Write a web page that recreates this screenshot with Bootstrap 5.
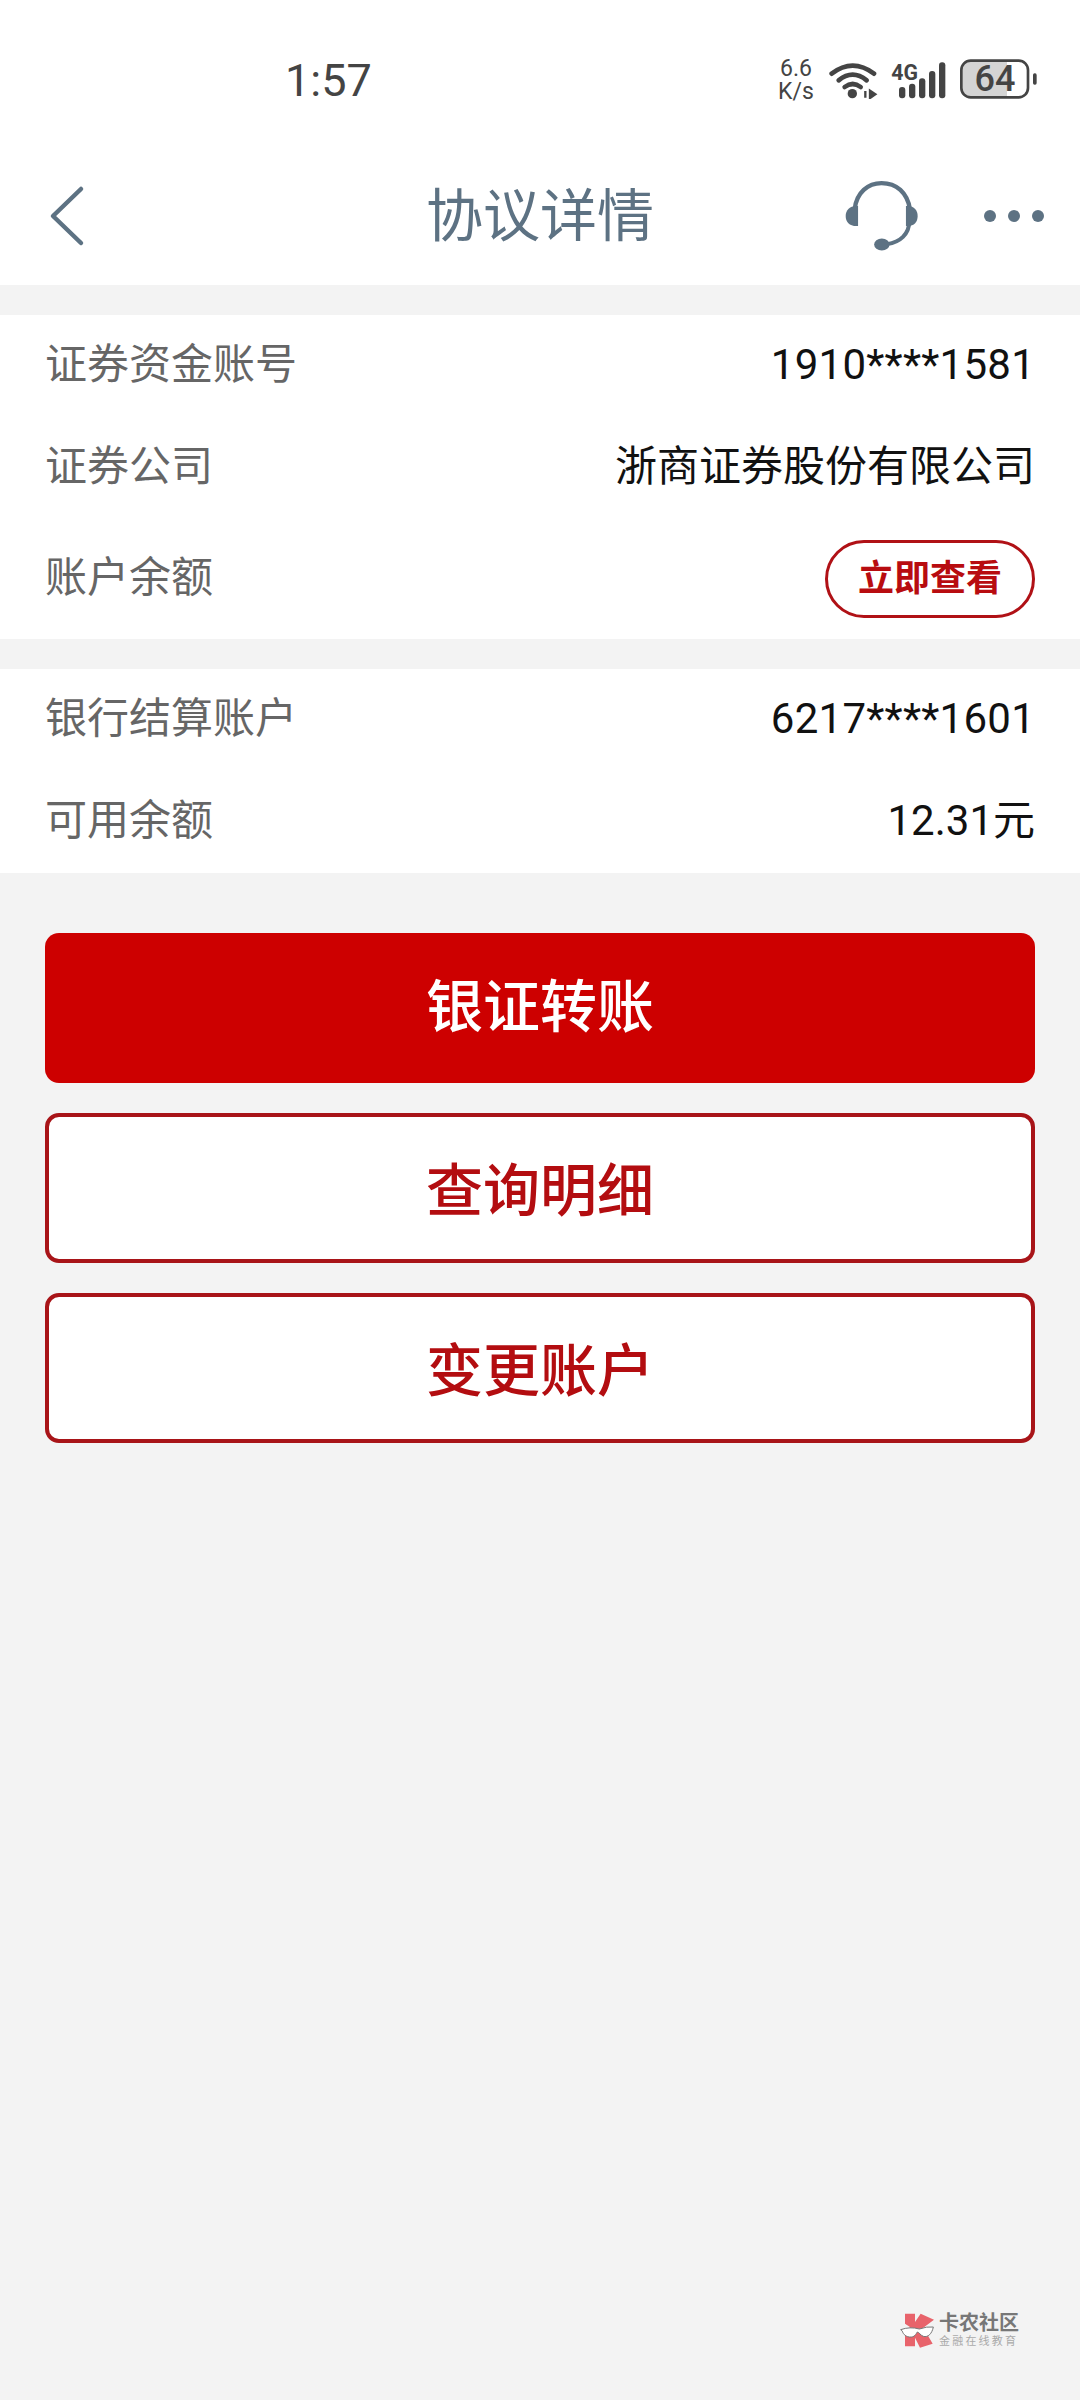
<!DOCTYPE html>
<html lang="zh-CN">
<head>
<meta charset="utf-8">
<title>协议详情</title>
<link href="https://cdn.jsdelivr.net/npm/bootstrap@5.3.0/dist/css/bootstrap.min.css" rel="stylesheet">
<style>
:root{--cn:Roboto,"Noto Sans CJK SC",sans-serif;}
html,body{height:2400px;}
body{background:#f3f3f3;font-family:var(--cn);position:relative;overflow:hidden;}
.hdr-wrap{height:285px;background:#fff;}
.stat-bar{height:130px;padding-top:15px;padding-right:42px;padding-left:285px;box-sizing:content-box;}
.stat-time{font-size:45px;line-height:1;color:#444;}
.stat-speed{font-size:23px;line-height:23px;color:#444;text-align:center;width:38px;margin-right:13px;}
.stat-svg text{font-family:Roboto,sans-serif;fill:#444;}
.stat-gap{margin-left:13px;}
.top-nav{height:140px;padding:6px 36px 4px 36px;}
.nav-side{flex:1 1 0;}
.nav-back{margin-left:13px;}
.nav-title{font-size:57px;line-height:1;color:#5d7283;}
.nav-more{margin-left:64px;}
.pane{background:#fff;padding:0 45px;}
.pane-one{margin-top:30px;height:324px;}
.pane-two{margin-top:30px;height:204px;}
.info-line{height:102px;font-size:42px;color:#111;padding-bottom:4px;}
.info-line-tall{height:120px;}
.info-num{letter-spacing:.25px;}
.info-key{color:#666;}
.pill-look{width:210px;height:78px;border:3px solid #b01116;border-radius:39px;background:#fff;color:#b80c10;font-size:36px;font-weight:700;padding:0;display:flex;align-items:center;justify-content:center;margin-top:4px;}
.act-stack{padding:60px 45px 0;gap:30px;}
.act-btn{height:150px;border-radius:14px;font-size:57px;font-weight:500;line-height:1;display:flex;align-items:center;justify-content:center;padding:0;}
.act-fill{background:#cd0000;border:0;color:#fff;padding-bottom:2px;}
.act-line{background:#fff;border:4px solid #a81418;color:#b30d10;padding-top:6px;}
.mark-wrap{position:absolute;left:900px;top:2313px;gap:4px;}
.mark-a{font-size:20px;font-weight:700;color:#777;line-height:21px;white-space:nowrap;}
.mark-b{font-size:11px;color:#aaa;line-height:12px;letter-spacing:2.2px;white-space:nowrap;margin-top:2px;}
</style>
</head>
<body>
<header class="hdr-wrap">
  <div class="stat-bar d-flex align-items-center">
    <div class="stat-time">1:57</div>
    <div class="ms-auto d-flex align-items-center">
      <div class="stat-speed">6.6<br>K/s</div>
      <svg class="stat-svg" width="50" height="38" viewBox="272 92 150 114" fill="none" stroke="#444" stroke-linecap="round">
        <path d="M283 130Q346 82 410 130" stroke-width="14"/>
        <path d="M304 150Q346 116 388 150" stroke-width="14"/>
        <path d="M322 170Q346 152 370 170" stroke-width="14"/>
        <circle cx="345" cy="190" r="14" fill="#444" stroke="none"/>
        <path d="M384 182v20M398 181v22l16-11z" stroke-width="7" stroke-linecap="butt" fill="#444"/>
      </svg>
      <svg class="stat-svg stat-gap" width="56" height="38" viewBox="458 92 168 114">
        <text x="459" y="150" font-size="64" font-weight="700" textLength="80" lengthAdjust="spacingAndGlyphs">4G</text>
        <g fill="#444">
          <rect x="482" y="170" width="19" height="34" rx="9"/>
          <rect x="512" y="160" width="19" height="44" rx="9"/>
          <rect x="542" y="144" width="19" height="60" rx="9"/>
          <rect x="572" y="122" width="19" height="82" rx="9"/>
          <rect x="602" y="96" width="19" height="108" rx="9"/>
        </g>
      </svg>
      <svg class="stat-svg stat-gap" width="78" height="42" viewBox="664 90 234 126">
        <path d="M695 95H805V205H695Q668 205 668 178V122Q668 95 695 95Z" fill="#d4d4d4"/>
        <rect x="668" y="95" width="200" height="110" rx="28" fill="none" stroke="#444" stroke-width="8"/>
        <rect x="883" y="133" width="11" height="34" rx="5" fill="#444"/>
        <text x="769" y="187" font-size="108" font-weight="500" text-anchor="middle">64</text>
      </svg>
    </div>
  </div>
  <nav class="top-nav d-flex align-items-center">
    <div class="nav-side d-flex">
      <svg class="nav-back" width="36" height="62" viewBox="48 179 36 62" fill="none" stroke="#5d7283" stroke-width="4.5" stroke-linecap="round" stroke-linejoin="round"><path d="M80 183 52 210l28 27"/></svg>
    </div>
    <div class="nav-title">协议详情</div>
    <div class="nav-side d-flex align-items-center justify-content-end">
      <svg width="77" height="74" viewBox="130 70 230 220" fill="#5d7283">
        <path d="M165 160C170 110 205 82 245 82C290 82 322 110 330 160" fill="none" stroke="#5d7283" stroke-width="13"/>
        <path d="M328 195C328 235 300 258 262 264" fill="none" stroke="#5d7283" stroke-width="12"/>
        <path d="M175 150V210C150 212 138 198 138 180C138 162 150 148 175 150Z"/>
        <path d="M318 150V210C342 212 353 198 353 180C353 162 342 148 318 150Z"/>
        <ellipse cx="246" cy="265" rx="23" ry="18"/>
      </svg>
      <svg class="nav-more" width="60" height="12" viewBox="0 0 60 12" fill="#5d7283"><circle cx="6" cy="6" r="6"/><circle cx="30" cy="6" r="6"/><circle cx="54" cy="6" r="6"/></svg>
    </div>
  </nav>
</header>

<section class="pane pane-one">
  <div class="info-line d-flex justify-content-between align-items-center"><span class="info-key">证券资金账号</span><span class="info-num">1910****1581</span></div>
  <div class="info-line d-flex justify-content-between align-items-center"><span class="info-key">证券公司</span><span>浙商证券股份有限公司</span></div>
  <div class="info-line info-line-tall d-flex justify-content-between align-items-center"><span class="info-key">账户余额</span><button type="button" class="btn pill-look">立即查看</button></div>
</section>

<section class="pane pane-two">
  <div class="info-line d-flex justify-content-between align-items-center"><span class="info-key">银行结算账户</span><span class="info-num">6217****1601</span></div>
  <div class="info-line d-flex justify-content-between align-items-center"><span class="info-key">可用余额</span><span>12.31元</span></div>
</section>

<div class="act-stack d-flex flex-column">
  <button type="button" class="btn act-btn act-fill">银证转账</button>
  <button type="button" class="btn act-btn act-line">查询明细</button>
  <button type="button" class="btn act-btn act-line">变更账户</button>
</div>

<div class="mark-wrap d-flex align-items-center">
  <svg width="35" height="35" viewBox="120 98 105 105">
    <path d="M135 100H165V125L182 100L222 118L190 142L218 190L180 202L165 172V198H135V165L150 140L135 130Z" fill="#e8636b"/>
    <path d="M122 148Q150 138 178 146Q200 138 220 140C216 160 204 172 190 168C180 164 178 156 172 155C168 160 165 172 148 170C134 168 128 158 127 152Z" fill="#fff" stroke="#777" stroke-width="3"/>
  </svg>
  <div>
    <div class="mark-a">卡农社区</div>
    <div class="mark-b">金融在线教育</div>
  </div>
</div>
<script src="https://cdn.jsdelivr.net/npm/bootstrap@5.3.0/dist/js/bootstrap.bundle.min.js"></script>
</body>
</html>
